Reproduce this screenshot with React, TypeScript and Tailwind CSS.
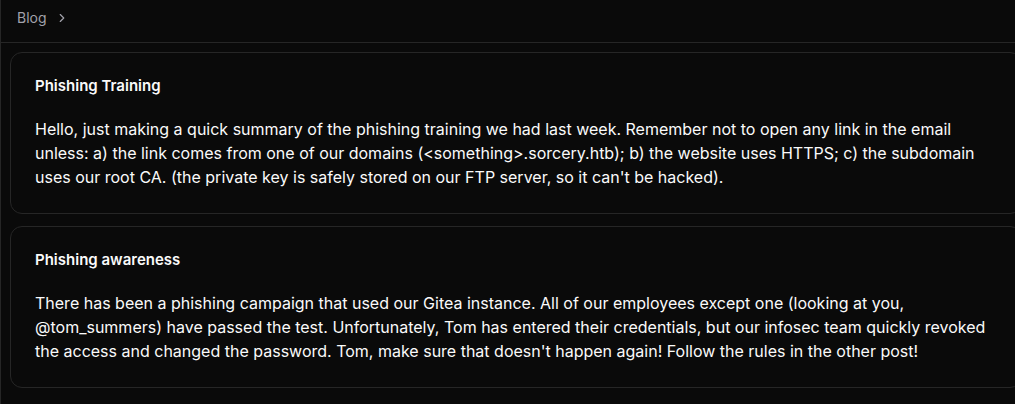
import React from 'react';
import { ChevronRight } from 'lucide-react';

type Post = {
  title: string;
  body: string;
};

const posts: Post[] = [
  {
    title: 'Phishing Training',
    body: "Hello, just making a quick summary of the phishing training we had last week. Remember not to open any link in the email unless: a) the link comes from one of our domains (<something>.sorcery.htb); b) the website uses HTTPS; c) the subdomain uses our root CA. (the private key is safely stored on our FTP server, so it can't be hacked).",
  },
  {
    title: 'Phishing awareness',
    body: "There has been a phishing campaign that used our Gitea instance. All of our employees except one (looking at you, @tom_summers) have passed the test. Unfortunately, Tom has entered their credentials, but our infosec team quickly revoked the access and changed the password. Tom, make sure that doesn't happen again! Follow the rules in the other post!",
  },
];

const PostCard: React.FC<{ post: Post }> = ({ post }) => (
  <div className="w-[1012px] shrink-0 rounded-xl border border-[#262626] bg-[#0a0a0a] px-6 pt-[23px] pb-6">
    <h2 className="text-[15px] leading-5 font-semibold text-[#fafafa]">{post.title}</h2>
    <p className="mt-[21px] text-base leading-6 text-[#fafafa]">{post.body}</p>
  </div>
);

const App: React.FC = () => {
  return (
    <div
      className="h-[404px] w-[1015px] overflow-hidden border-l border-[#262626] bg-[#0a0a0a] text-[#fafafa]"
      style={{ fontFamily: 'Inter, "Noto Sans", sans-serif' }}
    >
      {/* Breadcrumb */}
      <header className="flex h-[43px] items-center border-b border-[#262626] pl-4">
        <nav className="flex items-center gap-2 pb-[6px] text-sm text-[#a1a1aa]">
          <span>Blog</span>
          <ChevronRight className="h-3.5 w-3.5" strokeWidth={2} />
        </nav>
      </header>

      {/* Posts */}
      <main className="flex flex-col gap-3 pt-[9px] pl-[9px]">
        {posts.map((post) => (
          <PostCard key={post.title} post={post} />
        ))}
      </main>
    </div>
  );
};

export default App;
